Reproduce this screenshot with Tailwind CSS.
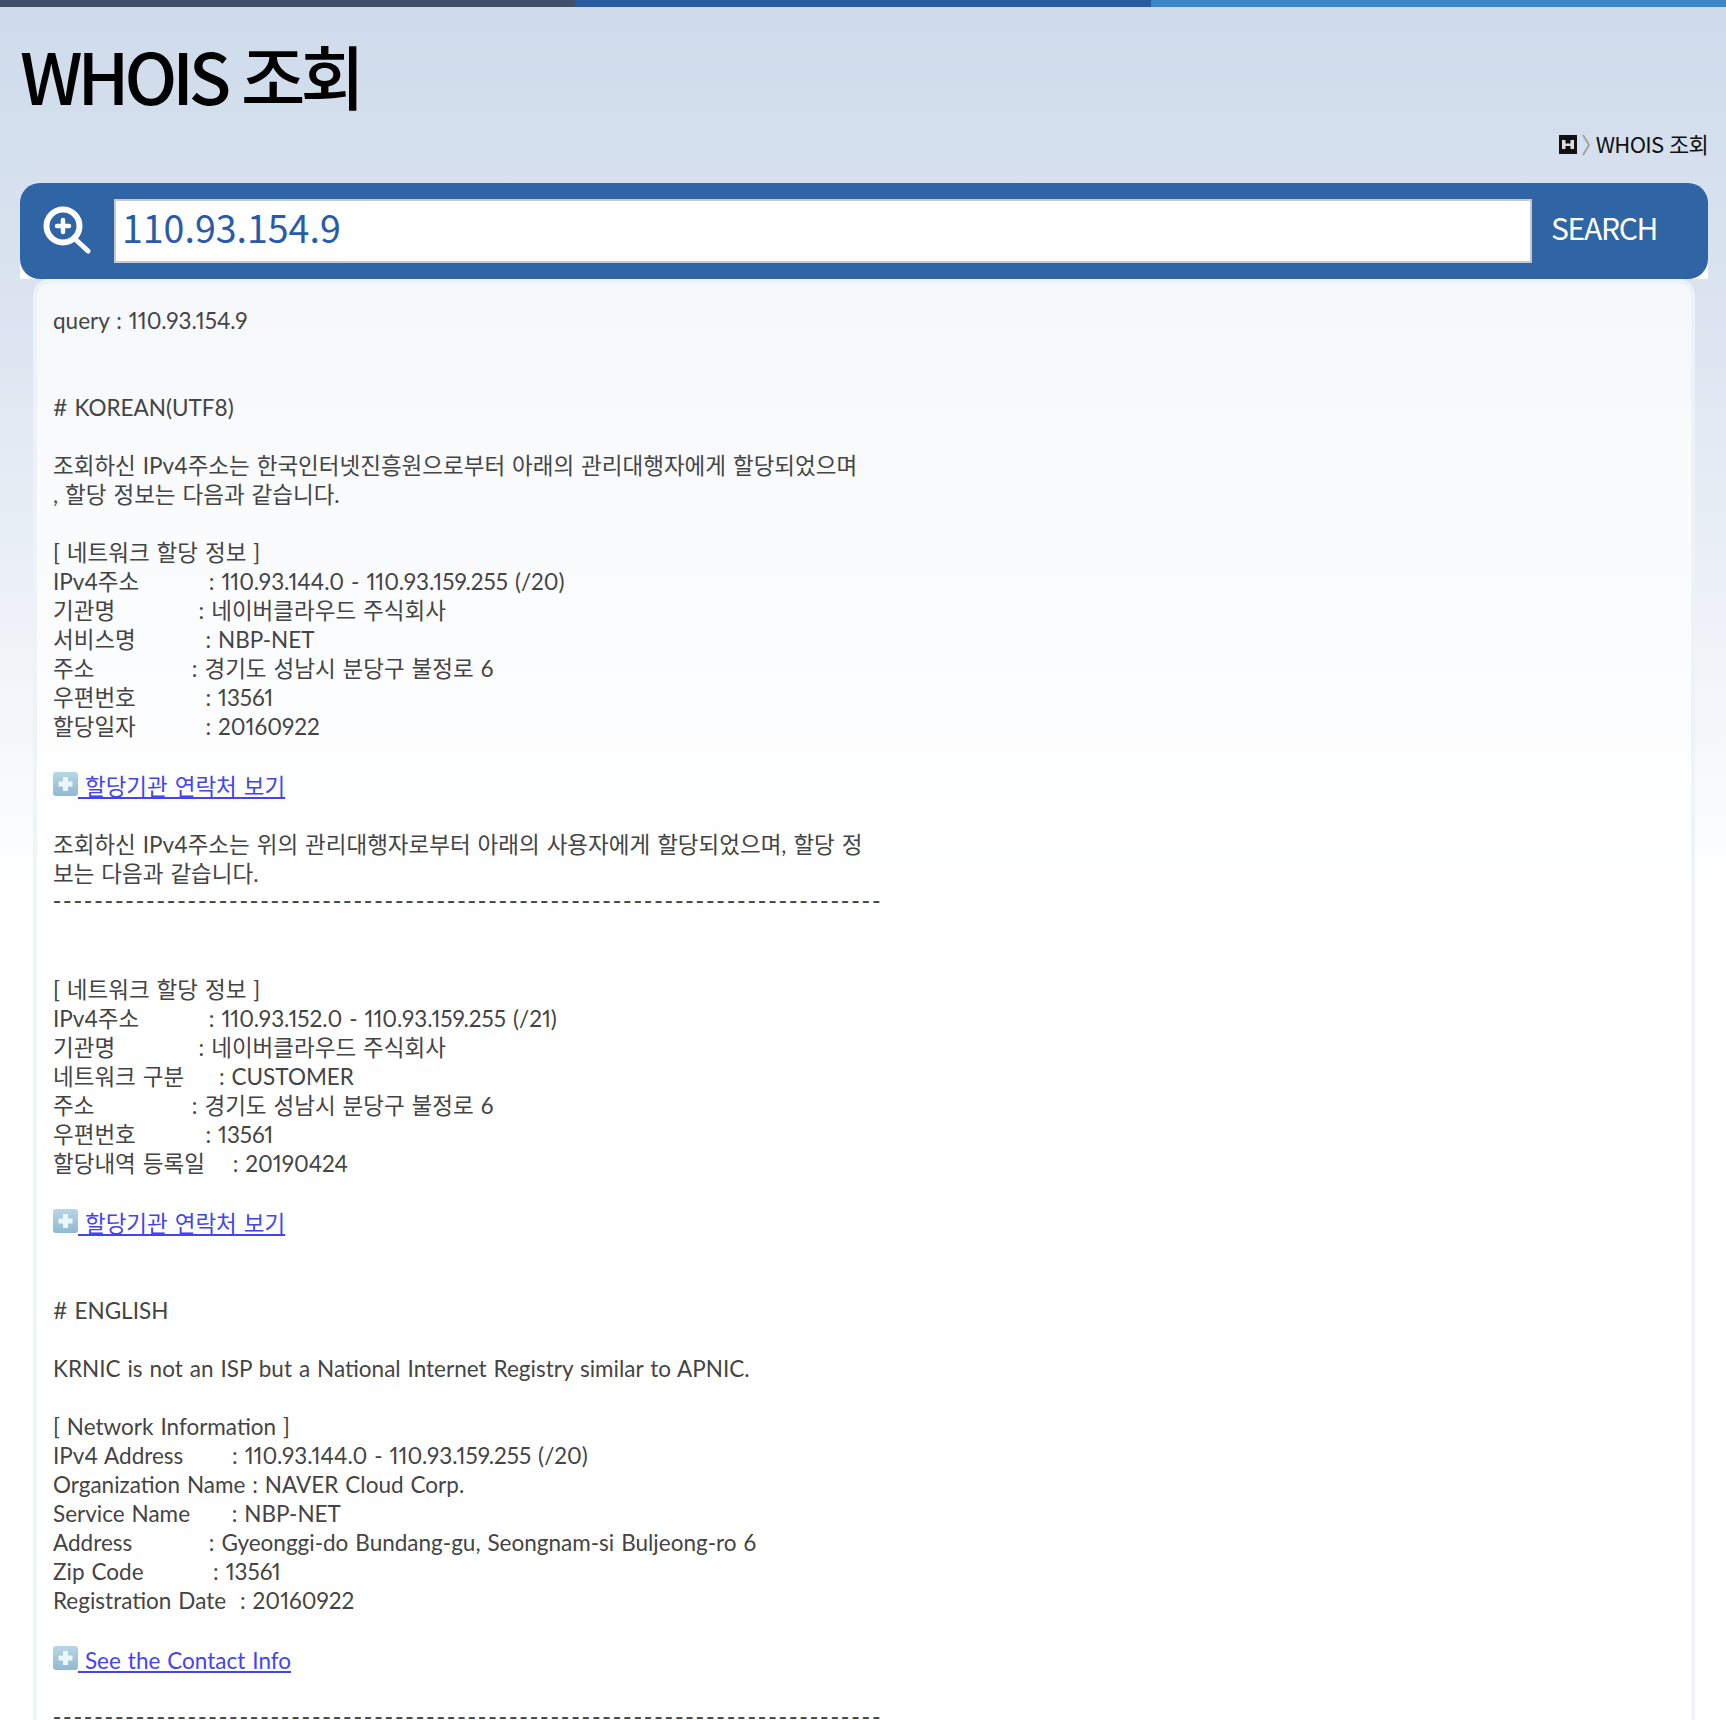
<!doctype html>
<html lang="ko"><head><meta charset="utf-8"><script src="https://cdn.jsdelivr.net/npm/@tailwindcss/browser@4"></script></head>
<body class="m-0 overflow-hidden">
<svg class="absolute h-0 w-0"><defs><linearGradient id="tile" x1="0" y1="0" x2="0" y2="1"><stop offset="0" stop-color="#b9d6e5"/><stop offset="1" stop-color="#8fb9d2"/></linearGradient></defs></svg>
<div class="h-[1720px] w-[1726px] overflow-hidden bg-gradient-to-b from-[#cfdbeb] via-[#dbe4f0] via-[18%] to-white to-[52%] font-['Noto_Sans_CJK_KR','Noto_Sans',sans-serif]">
<div class="flex h-[7px]"><div class="flex-1 bg-[#434f66]"></div><div class="flex-1 bg-[#2a5aa0]"></div><div class="flex-1 bg-[#3a87c8]"></div></div>
<header class="relative h-[176px] pl-5">
<h1 class="pt-[18px] text-[70px] leading-[100px] font-medium tracking-[-5px] text-black">WHOIS 조회</h1>
<div class="absolute right-[18px] top-[120px] flex items-center text-[22px] leading-[32px] tracking-[-0.700px] text-[#111]">
<svg class="mt-[3px]" width="18" height="19" viewBox="0 0 18 19"><rect width="18" height="19" fill="#111"/><path d="M3 5h3.500v3.500h5V5H15v9h-3.500v-3h-5v3H3z" fill="#ddd"/></svg>
<svg class="ml-[5px] mt-[3px]" width="8" height="22" viewBox="0 0 8 22"><path d="M1 1l6 10-6 10" fill="none" stroke="#a3a3a3" stroke-width="2"/></svg>
<span class="ml-[6px]">WHOIS 조회</span></div>
</header>
<div class="ml-5 mr-[18px] bg-[linear-gradient(to_bottom,transparent_74px,white_74px)]">
<div class="flex h-[96px] items-center rounded-[20px] bg-[#2f65a4]">
<div class="flex w-[94px] shrink-0 pl-[23px]">
<svg width="48" height="50" viewBox="0 0 48 50"><circle cx="20" cy="20" r="16.500" fill="none" stroke="#fff" stroke-width="6"/><path d="M14 20h12M20 14v12" stroke="#fff" stroke-width="4.500" stroke-linecap="round"/><path d="M31 32l14 13" stroke="#fff" stroke-width="5" stroke-linecap="round"/></svg></div>
<div class="flex h-[64px] w-[1418px] items-center border-2 border-[#c9c9c9] bg-white pb-[8px] pl-[6px] text-[37.5px] text-[#2a5ba8]">110.93.154.9</div>
<div class="ml-[19px] pb-[8px] text-[30px] tracking-[-1.300px] text-white">SEARCH</div>
</div></div>
<main class="ml-[33px] mr-[31px] h-[1500px] rounded-t-[16px] border-4 border-[#eef2f8]/90 bg-white/75 bg-clip-padding pl-4 pt-[23px] text-[22.5px] leading-[29px] text-[#444]">
<pre class="whitespace-pre font-['Lato','Noto_Sans_CJK_KR',sans-serif] [word-spacing:1.200px] proportional-nums">query : 110.93.154.9


# KOREAN(UTF8)

조회하신 IPv4주소는 한국인터넷진흥원으로부터 아래의 관리대행자에게 할당되었으며
, 할당 정보는 다음과 같습니다.

[ 네트워크 할당 정보 ]
IPv4주소          : 110.93.144.0 - 110.93.159.255 (/20)
기관명            : 네이버클라우드 주식회사
서비스명          : NBP-NET
주소              : 경기도 성남시 분당구 불정로 6
우편번호          : 13561
할당일자          : 20160922

<a class="inline-block pt-[2px] text-[#4444ee] underline"><svg class="mr-0 inline-block align-[-1px]" width="25" height="24" viewBox="0 0 25 24"><rect width="25" height="24" rx="3" fill="url(#tile)"/><path d="M10 5h5v4.500h4.500v5H15V19h-5v-4.500H5.500v-5H10z" fill="#eef6fa"/></svg> 할당기관 연락처 보기</a>

조회하신 IPv4주소는 위의 관리대행자로부터 아래의 사용자에게 할당되었으며, 할당 정
보는 다음과 같습니다.
<span class="align-[3px] font-['DejaVu_Sans'] leading-none tracking-[2.250px]">--------------------------------------------------------------------------------</span>


[ 네트워크 할당 정보 ]
IPv4주소          : 110.93.152.0 - 110.93.159.255 (/21)
기관명            : 네이버클라우드 주식회사
네트워크 구분     : CUSTOMER
주소              : 경기도 성남시 분당구 불정로 6
우편번호          : 13561
할당내역 등록일    : 20190424

<a class="inline-block pt-[2px] text-[#4444ee] underline"><svg class="mr-0 inline-block align-[-1px]" width="25" height="24" viewBox="0 0 25 24"><rect width="25" height="24" rx="3" fill="url(#tile)"/><path d="M10 5h5v4.500h4.500v5H15V19h-5v-4.500H5.500v-5H10z" fill="#eef6fa"/></svg> 할당기관 연락처 보기</a>


# ENGLISH

KRNIC is not an ISP but a National Internet Registry similar to APNIC.

[ Network Information ]
IPv4 Address       : 110.93.144.0 - 110.93.159.255 (/20)
Organization Name : NAVER Cloud Corp.
Service Name      : NBP-NET
Address           : Gyeonggi-do Bundang-gu, Seongnam-si Buljeong-ro 6
Zip Code          : 13561
Registration Date  : 20160922

<a class="inline-block pt-[2px] text-[#4444ee] underline"><svg class="mr-0 inline-block align-[-1px]" width="25" height="24" viewBox="0 0 25 24"><rect width="25" height="24" rx="3" fill="url(#tile)"/><path d="M10 5h5v4.500h4.500v5H15V19h-5v-4.500H5.500v-5H10z" fill="#eef6fa"/></svg> See the Contact Info</a>

<span class="align-[3px] font-['DejaVu_Sans'] leading-none tracking-[2.250px]">--------------------------------------------------------------------------------</span></pre>
</main>
</div>
</body></html>
